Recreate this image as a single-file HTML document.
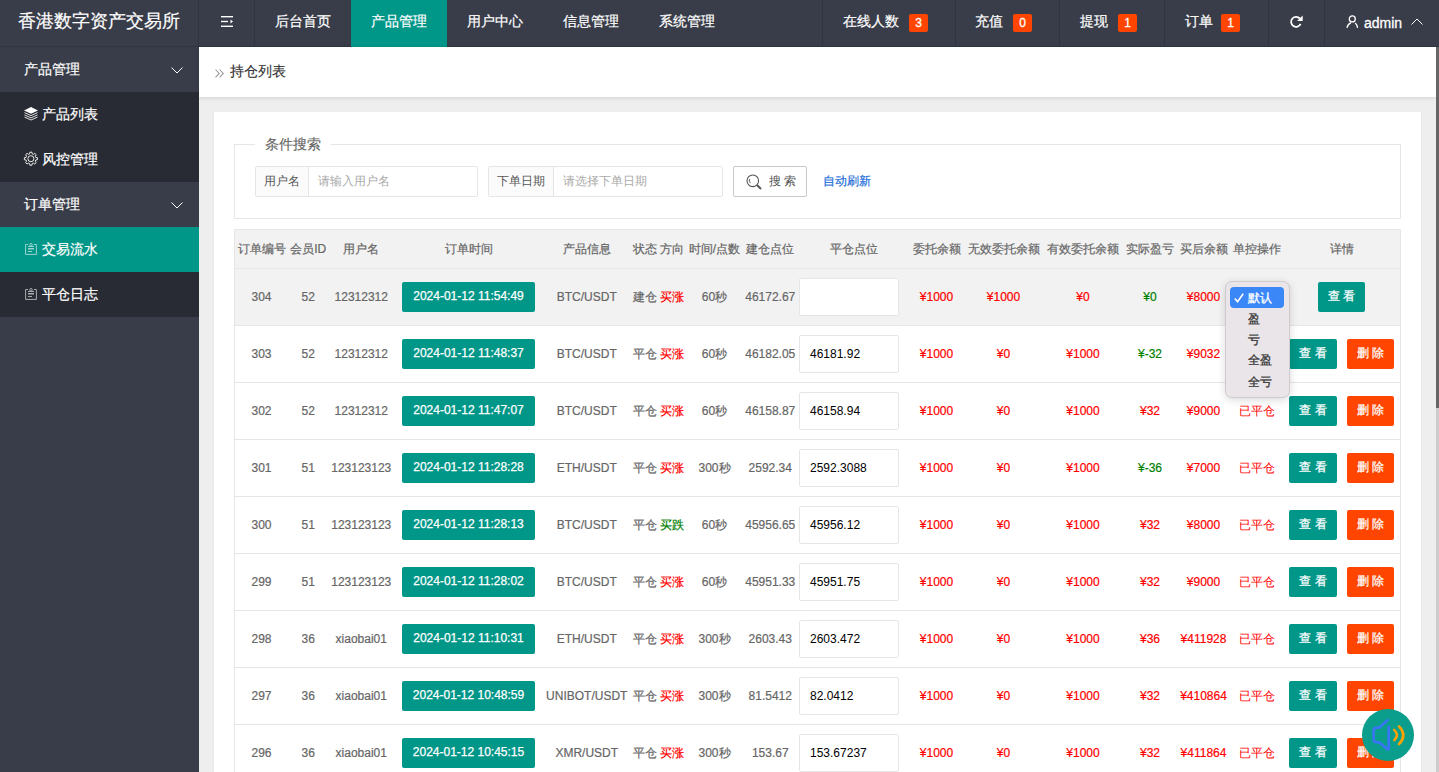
<!DOCTYPE html>
<html><head><meta charset="utf-8">
<style>
*{box-sizing:border-box;margin:0;padding:0}
html,body{width:1439px;height:772px;overflow:hidden}
body{font-family:"Liberation Sans",sans-serif;font-size:14px;color:#666;background:#eee;position:relative}
.abs{position:absolute}
svg{position:absolute;overflow:visible}
#hdr{position:absolute;left:0;top:0;width:1439px;height:47px;background:#393D49}
#hdr .t{position:absolute;top:0;height:47px;line-height:43px;-webkit-text-stroke:0.2px #fff;color:#fff;font-size:14px;white-space:nowrap}
.vd{position:absolute;top:0;width:1px;height:47px;background:#30343e}
.badge{position:absolute;top:14px;width:19px;height:18px;background:#FF4500;color:#fff;border-radius:2px;font-size:12px;line-height:18px;text-align:center;-webkit-text-stroke:0.3px #fff}
#side{position:absolute;left:0;top:47px;width:199px;height:725px;background:#393D49}
.si{position:absolute;left:0;width:199px;height:45px;line-height:44px;color:#fff;font-size:14px;-webkit-text-stroke:0.2px #fff}
.si.child{background:#282B33}
.si.act{background:#009688}
#crumb{position:absolute;left:199px;top:47px;width:1237px;height:50px;background:#fff;box-shadow:0 1px 4px rgba(0,0,0,.12)}
#panel{position:absolute;left:214px;top:112px;width:1207px;height:700px;background:#fff;box-shadow:0 1px 2px rgba(0,0,0,.06)}
#fs{position:absolute;left:234px;top:144px;width:1167px;height:75px;border:1px solid #e6e6e6}
#legend{position:absolute;left:255px;top:133px;width:76px;height:22px;background:#fff;text-align:center;line-height:22px;font-size:14px;color:#666;-webkit-text-stroke:0.15px #666}
.ig{position:absolute;top:166px;height:31px;border:1px solid #e6e6e6;border-radius:2px;background:#fff;font-size:12px;line-height:29px}
.ig .lb{position:absolute;left:0;top:0;height:29px;background:#FBFBFB;border-right:1px solid #e6e6e6;color:#555;text-align:center}
.ig .ph{position:absolute;top:0;color:#aaa}
#srch{position:absolute;left:733px;top:166px;width:74px;height:31px;border:1px solid #C9C9C9;border-radius:2px;background:#fff;color:#555;font-size:12px;line-height:29px}
#tbl{position:absolute;left:234px;top:229px;width:1167px;height:560px;border:1px solid #e6e6e6;border-bottom:0;background:#fff}
.tr{position:absolute;left:0;width:1165px;height:57px;border-top:1px solid #e6e6e6;font-size:12px;color:#666;-webkit-text-stroke:0.2px currentColor}
.tr.th{border-top:0;background:#F2F2F2;line-height:38px}
.tr.hov{background:#F2F2F2}
.c{position:absolute;top:0;height:56px;line-height:56px;text-align:center;white-space:nowrap}
.th .c{height:38px;line-height:38px}
.btn{display:inline-block;height:30px;line-height:28px;-webkit-text-stroke:0.25px #fff;padding:0 10px;border-radius:2px;color:#fff;font-size:12px;vertical-align:middle;white-space:nowrap}
.tb{position:absolute;top:13px;width:133px;padding:0;text-align:center;background:#009688}
.vb{position:absolute;top:13px;background:#009688}
.db{position:absolute;top:13px;background:#FF4500}
.inp{position:absolute;top:9px;width:100px;height:38px;border:1px solid #e6e6e6;border-radius:2px;background:#fff;color:#000;font-size:12px;line-height:36px;padding-left:10px;-webkit-text-stroke:0}
#pop{position:absolute;left:1224.5px;top:281px;width:65.5px;height:117px;background:#EAE5E8;border:1px solid #cfcacd;border-radius:7px;box-shadow:0 2px 9px rgba(0,0,0,.15)}
#pop .it{position:absolute;left:22px;font-size:12px;color:#333;line-height:14px;-webkit-text-stroke:0.3px currentColor}
#hl{position:absolute;left:4px;top:5px;width:54px;height:21px;background:#3B87F8;border-radius:4px}
#fab{position:absolute;left:1362px;top:709px;width:52px;height:52px;border-radius:50%;background:#0B9E8C}
#sb{position:absolute;left:1436px;top:47px;width:3px;height:725px;background:#ccc}
#sbt{position:absolute;left:0;top:0;width:3px;height:361px;background:#666}
</style></head><body>
<div id="hdr">
  <div class="t" style="left:18px;font-size:18px">香港数字资产交易所</div>
  <div class="abs" style="left:0;top:46px;width:1439px;height:1px;background:#30343e"></div>
  <div class="vd" style="left:198px"></div>
  <div class="vd" style="left:254px"></div>
  <svg style="left:221px;top:16px" width="12" height="11" viewBox="0 0 12 11"><rect x="0" y="0" width="12" height="1.4" fill="#fff"/><rect x="0" y="4.8" width="7" height="1.4" fill="#fff"/><path d="M9.5 3.6 L12 5.5 L9.5 7.4Z" fill="#fff"/><rect x="0" y="9.6" width="12" height="1.4" fill="#fff"/></svg>
  <div class="abs" style="left:351px;top:0;width:96px;height:47px;background:#009688"></div>
  <div class="t" style="left:275px">后台首页</div>
  <div class="t" style="left:371px">产品管理</div>
  <div class="t" style="left:467px">用户中心</div>
  <div class="t" style="left:563px">信息管理</div>
  <div class="t" style="left:659px">系统管理</div>
  <div class="vd" style="left:822px"></div>
  <div class="t" style="left:843px">在线人数</div><div class="badge" style="left:909px">3</div>
  <div class="vd" style="left:955px"></div>
  <div class="t" style="left:975px">充值</div><div class="badge" style="left:1013px">0</div>
  <div class="vd" style="left:1059px"></div>
  <div class="t" style="left:1080px">提现</div><div class="badge" style="left:1118px">1</div>
  <div class="vd" style="left:1164px"></div>
  <div class="t" style="left:1185px">订单</div><div class="badge" style="left:1221px">1</div>
  <div class="vd" style="left:1268px"></div>
  <svg style="left:1289px;top:15px" width="15" height="14" viewBox="0 0 15 14"><path d="M10.93 3.59 A5 5 0 1 0 11.63 8.91" fill="none" stroke="#fff" stroke-width="1.8"/><path d="M13.7 0.6 L13.7 5.9 L8.1 5.9 Z" fill="#fff"/></svg>
  <div class="vd" style="left:1324px"></div>
  <svg style="left:1346px;top:14px" width="13" height="15" viewBox="0 0 13 15"><circle cx="6.3" cy="4.9" r="3.0" fill="none" stroke="#fff" stroke-width="1.3"/><path d="M1.0 13.8 Q1.6 10.2 5 8.6" fill="none" stroke="#fff" stroke-width="1.3"/><path d="M9.2 9.0 Q11 10.6 11.6 13.8" fill="none" stroke="#fff" stroke-width="1.3"/></svg>
  <div class="t" style="left:1364px;top:1.5px;font-size:14px;-webkit-text-stroke:0.3px #fff">admin</div>
  <svg style="left:1411px;top:18px" width="12" height="7" viewBox="0 0 12 7"><path d="M0.5 6.5 L6 1 L11.5 6.5" fill="none" stroke="#fff" stroke-width="1"/></svg>
</div>
<div id="side">
  <div class="si" style="top:0"><span class="abs" style="left:24px">产品管理</span>
    <svg style="left:171px;top:20px" width="12" height="7" viewBox="0 0 12 7"><path d="M0.5 0.5 L6 6 L11.5 0.5" fill="none" stroke="#fff" stroke-width="1"/></svg></div>
  <div class="si child" style="top:45px">
    <svg style="left:24px;top:15px" width="14" height="13" viewBox="0 0 14 13"><path d="M7 0 L14 3.4 L7 6.8 L0 3.4Z" fill="#fff"/><path d="M0.5 5.6 L7 8.6 L13.5 5.6 M0.5 7.9 L7 10.9 L13.5 7.9 M0.5 10.1 L7 13 L13.5 10.1" fill="none" stroke="#fff" stroke-width="1" opacity=".85"/></svg>
    <span class="abs" style="left:42px">产品列表</span></div>
  <div class="si child" style="top:90px">
    <svg style="left:23px;top:14px" width="16" height="16" viewBox="0 0 16 16"><path d="M6.87 1.18 L8.93 1.18 L9.19 2.87 L10.40 3.37 L11.78 2.36 L13.24 3.82 L12.23 5.20 L12.73 6.41 L14.42 6.67 L14.42 8.73 L12.73 8.99 L12.23 10.20 L13.24 11.58 L11.78 13.04 L10.40 12.03 L9.19 12.53 L8.93 14.22 L6.87 14.22 L6.61 12.53 L5.40 12.03 L4.02 13.04 L2.56 11.58 L3.57 10.20 L3.07 8.99 L1.38 8.73 L1.38 6.67 L3.07 6.41 L3.57 5.20 L2.56 3.82 L4.02 2.36 L5.40 3.37 L6.61 2.87Z" fill="none" stroke="#fff" stroke-width="1" stroke-linejoin="round" opacity=".9"/><circle cx="7.9" cy="7.7" r="3" fill="none" stroke="#fff" stroke-width="1" opacity=".9"/></svg>
    <span class="abs" style="left:42px">风控管理</span></div>
  <div class="si" style="top:135px"><span class="abs" style="left:24px">订单管理</span>
    <svg style="left:171px;top:20px" width="12" height="7" viewBox="0 0 12 7"><path d="M0.5 0.5 L6 6 L11.5 0.5" fill="none" stroke="#fff" stroke-width="1"/></svg></div>
  <div class="si act" style="top:180px">
    <svg style="left:25px;top:16px" width="12" height="12" viewBox="0 0 12 12" opacity=".6"><path d="M3 1.5 L0.6 1.5 L0.6 11.4 L11.4 11.4 L11.4 1.5 L9 1.5" fill="none" stroke="#fff" stroke-width="1"/><circle cx="6" cy="1.8" r="1.3" fill="none" stroke="#fff" stroke-width="1"/><rect x="3" y="3" width="6" height="1" fill="#fff"/><rect x="3" y="5" width="6" height="1.5" fill="#fff"/><rect x="3" y="8" width="4" height="1" fill="#fff"/></svg>
    <span class="abs" style="left:42px">交易流水</span></div>
  <div class="si child" style="top:225px">
    <svg style="left:25px;top:16px" width="12" height="12" viewBox="0 0 12 12" opacity=".6"><path d="M3 1.5 L0.6 1.5 L0.6 11.4 L11.4 11.4 L11.4 1.5 L9 1.5" fill="none" stroke="#fff" stroke-width="1"/><circle cx="6" cy="1.8" r="1.3" fill="none" stroke="#fff" stroke-width="1"/><rect x="3" y="3" width="6" height="1" fill="#fff"/><rect x="3" y="5" width="6" height="1.5" fill="#fff"/><rect x="3" y="8" width="4" height="1" fill="#fff"/></svg>
    <span class="abs" style="left:42px">平仓日志</span></div>
</div>
<div id="crumb">
  <svg style="left:15.5px;top:21.7px" width="9" height="9" viewBox="0 0 9 9"><path d="M0.5 0.5 L4.2 4.4 L0.5 8.3 M4.6 0.5 L8.3 4.4 L4.6 8.3" fill="none" stroke="#999" stroke-width="1.05"/></svg>
  <span class="abs" style="left:31px;top:14px;color:#333;font-size:14px;line-height:20px;-webkit-text-stroke:0.15px #333">持仓列表</span></div>
<div id="panel"></div>
<div id="fs"></div>
<div id="legend">条件搜索</div>
<div class="ig" style="left:255px;width:223px"><div class="lb" style="width:53px">用户名</div><div class="ph" style="left:62px">请输入用户名</div></div>
<div class="ig" style="left:488px;width:235px"><div class="lb" style="width:65px">下单日期</div><div class="ph" style="left:74px">请选择下单日期</div></div>
<div id="srch">
  <svg style="left:12px;top:7px" width="16" height="16" viewBox="0 0 16 16"><circle cx="6.8" cy="6.8" r="5.8" fill="none" stroke="#555" stroke-width="1.1"/><path d="M11 11 L15 15" stroke="#555" stroke-width="2"/><path d="M3.6 5 A3.8 3.8 0 0 0 4.4 9.2" fill="none" stroke="#555" stroke-width="0.9"/></svg>
  <span class="abs" style="left:35px;top:0;letter-spacing:3px">搜索</span></div>
<div class="abs" style="left:823px;top:171px;font-size:12px;line-height:20px;color:#1E6FD9;-webkit-text-stroke:0.2px #1E6FD9">自动刷新</div>
<div id="tbl">
<div class="tr th" style="top:0px;height:38px"><div class="c" style="left:0px;width:53px">订单编号</div><div class="c" style="left:53px;width:40.5px">会员ID</div><div class="c" style="left:93.5px;width:65.5px">用户名</div><div class="c" style="left:159px;width:149px">订单时间</div><div class="c" style="left:308px;width:87.5px">产品信息</div><div class="c" style="left:395.5px;width:55.5px">状态 方向</div><div class="c" style="left:451px;width:57px">时间/点数</div><div class="c" style="left:508px;width:54.5px">建仓点位</div><div class="c" style="left:562.5px;width:113.5px">平仓点位</div><div class="c" style="left:676px;width:51px">委托余额</div><div class="c" style="left:727px;width:83px">无效委托余额</div><div class="c" style="left:810px;width:76px">有效委托余额</div><div class="c" style="left:886px;width:58px">实际盈亏</div><div class="c" style="left:944px;width:49px">买后余额</div><div class="c" style="left:993px;width:58px">单控操作</div><div class="c" style="left:1051px;width:111.5px">详情</div></div>
<div class="tr hov" style="top:38px"><div class="c" style="left:0px;width:53px">304</div><div class="c" style="left:53px;width:40.5px">52</div><div class="c" style="left:93.5px;width:65.5px">12312312</div><span class="btn tb" style="left:167px">2024-01-12 11:54:49</span><div class="c" style="left:308px;width:87.5px">BTC/USDT</div><div class="c" style="left:395.5px;width:55.5px">建仓 <span style="color:#f00">买涨</span></div><div class="c" style="left:451px;width:57px">60秒</div><div class="c" style="left:508px;width:54.5px">46172.67</div><div class="inp" style="left:564px"></div><div class="c" style="left:676px;width:51px"><span style="color:#f00">¥1000</span></div><div class="c" style="left:727px;width:83px"><span style="color:#f00">¥1000</span></div><div class="c" style="left:810px;width:76px"><span style="color:#f00">¥0</span></div><div class="c" style="left:886px;width:58px"><span style="color:#008000">¥0</span></div><div class="c" style="left:944px;width:49px"><span style="color:#f00">¥8000</span></div><div class="c" style="left:993px;width:58px"><span style="color:#f00;-webkit-text-stroke:0"></span></div><span class="btn vb" style="left:1083.1px">查 看</span></div>
<div class="tr" style="top:95px"><div class="c" style="left:0px;width:53px">303</div><div class="c" style="left:53px;width:40.5px">52</div><div class="c" style="left:93.5px;width:65.5px">12312312</div><span class="btn tb" style="left:167px">2024-01-12 11:48:37</span><div class="c" style="left:308px;width:87.5px">BTC/USDT</div><div class="c" style="left:395.5px;width:55.5px">平仓 <span style="color:#f00">买涨</span></div><div class="c" style="left:451px;width:57px">60秒</div><div class="c" style="left:508px;width:54.5px">46182.05</div><div class="inp" style="left:564px">46181.92</div><div class="c" style="left:676px;width:51px"><span style="color:#f00">¥1000</span></div><div class="c" style="left:727px;width:83px"><span style="color:#f00">¥0</span></div><div class="c" style="left:810px;width:76px"><span style="color:#f00">¥1000</span></div><div class="c" style="left:886px;width:58px"><span style="color:#008000">¥-32</span></div><div class="c" style="left:944px;width:49px"><span style="color:#f00">¥9032</span></div><div class="c" style="left:993px;width:58px"><span style="color:#f00;-webkit-text-stroke:0">已平仓</span></div><span class="btn vb" style="left:1054.2px">查 看</span><span class="btn db" style="left:1112px">删 除</span></div>
<div class="tr" style="top:152px"><div class="c" style="left:0px;width:53px">302</div><div class="c" style="left:53px;width:40.5px">52</div><div class="c" style="left:93.5px;width:65.5px">12312312</div><span class="btn tb" style="left:167px">2024-01-12 11:47:07</span><div class="c" style="left:308px;width:87.5px">BTC/USDT</div><div class="c" style="left:395.5px;width:55.5px">平仓 <span style="color:#f00">买涨</span></div><div class="c" style="left:451px;width:57px">60秒</div><div class="c" style="left:508px;width:54.5px">46158.87</div><div class="inp" style="left:564px">46158.94</div><div class="c" style="left:676px;width:51px"><span style="color:#f00">¥1000</span></div><div class="c" style="left:727px;width:83px"><span style="color:#f00">¥0</span></div><div class="c" style="left:810px;width:76px"><span style="color:#f00">¥1000</span></div><div class="c" style="left:886px;width:58px"><span style="color:#f00">¥32</span></div><div class="c" style="left:944px;width:49px"><span style="color:#f00">¥9000</span></div><div class="c" style="left:993px;width:58px"><span style="color:#f00;-webkit-text-stroke:0">已平仓</span></div><span class="btn vb" style="left:1054.2px">查 看</span><span class="btn db" style="left:1112px">删 除</span></div>
<div class="tr" style="top:209px"><div class="c" style="left:0px;width:53px">301</div><div class="c" style="left:53px;width:40.5px">51</div><div class="c" style="left:93.5px;width:65.5px">123123123</div><span class="btn tb" style="left:167px">2024-01-12 11:28:28</span><div class="c" style="left:308px;width:87.5px">ETH/USDT</div><div class="c" style="left:395.5px;width:55.5px">平仓 <span style="color:#f00">买涨</span></div><div class="c" style="left:451px;width:57px">300秒</div><div class="c" style="left:508px;width:54.5px">2592.34</div><div class="inp" style="left:564px">2592.3088</div><div class="c" style="left:676px;width:51px"><span style="color:#f00">¥1000</span></div><div class="c" style="left:727px;width:83px"><span style="color:#f00">¥0</span></div><div class="c" style="left:810px;width:76px"><span style="color:#f00">¥1000</span></div><div class="c" style="left:886px;width:58px"><span style="color:#008000">¥-36</span></div><div class="c" style="left:944px;width:49px"><span style="color:#f00">¥7000</span></div><div class="c" style="left:993px;width:58px"><span style="color:#f00;-webkit-text-stroke:0">已平仓</span></div><span class="btn vb" style="left:1054.2px">查 看</span><span class="btn db" style="left:1112px">删 除</span></div>
<div class="tr" style="top:266px"><div class="c" style="left:0px;width:53px">300</div><div class="c" style="left:53px;width:40.5px">51</div><div class="c" style="left:93.5px;width:65.5px">123123123</div><span class="btn tb" style="left:167px">2024-01-12 11:28:13</span><div class="c" style="left:308px;width:87.5px">BTC/USDT</div><div class="c" style="left:395.5px;width:55.5px">平仓 <span style="color:#008000">买跌</span></div><div class="c" style="left:451px;width:57px">60秒</div><div class="c" style="left:508px;width:54.5px">45956.65</div><div class="inp" style="left:564px">45956.12</div><div class="c" style="left:676px;width:51px"><span style="color:#f00">¥1000</span></div><div class="c" style="left:727px;width:83px"><span style="color:#f00">¥0</span></div><div class="c" style="left:810px;width:76px"><span style="color:#f00">¥1000</span></div><div class="c" style="left:886px;width:58px"><span style="color:#f00">¥32</span></div><div class="c" style="left:944px;width:49px"><span style="color:#f00">¥8000</span></div><div class="c" style="left:993px;width:58px"><span style="color:#f00;-webkit-text-stroke:0">已平仓</span></div><span class="btn vb" style="left:1054.2px">查 看</span><span class="btn db" style="left:1112px">删 除</span></div>
<div class="tr" style="top:323px"><div class="c" style="left:0px;width:53px">299</div><div class="c" style="left:53px;width:40.5px">51</div><div class="c" style="left:93.5px;width:65.5px">123123123</div><span class="btn tb" style="left:167px">2024-01-12 11:28:02</span><div class="c" style="left:308px;width:87.5px">BTC/USDT</div><div class="c" style="left:395.5px;width:55.5px">平仓 <span style="color:#f00">买涨</span></div><div class="c" style="left:451px;width:57px">60秒</div><div class="c" style="left:508px;width:54.5px">45951.33</div><div class="inp" style="left:564px">45951.75</div><div class="c" style="left:676px;width:51px"><span style="color:#f00">¥1000</span></div><div class="c" style="left:727px;width:83px"><span style="color:#f00">¥0</span></div><div class="c" style="left:810px;width:76px"><span style="color:#f00">¥1000</span></div><div class="c" style="left:886px;width:58px"><span style="color:#f00">¥32</span></div><div class="c" style="left:944px;width:49px"><span style="color:#f00">¥9000</span></div><div class="c" style="left:993px;width:58px"><span style="color:#f00;-webkit-text-stroke:0">已平仓</span></div><span class="btn vb" style="left:1054.2px">查 看</span><span class="btn db" style="left:1112px">删 除</span></div>
<div class="tr" style="top:380px"><div class="c" style="left:0px;width:53px">298</div><div class="c" style="left:53px;width:40.5px">36</div><div class="c" style="left:93.5px;width:65.5px">xiaobai01</div><span class="btn tb" style="left:167px">2024-01-12 11:10:31</span><div class="c" style="left:308px;width:87.5px">ETH/USDT</div><div class="c" style="left:395.5px;width:55.5px">平仓 <span style="color:#f00">买涨</span></div><div class="c" style="left:451px;width:57px">300秒</div><div class="c" style="left:508px;width:54.5px">2603.43</div><div class="inp" style="left:564px">2603.472</div><div class="c" style="left:676px;width:51px"><span style="color:#f00">¥1000</span></div><div class="c" style="left:727px;width:83px"><span style="color:#f00">¥0</span></div><div class="c" style="left:810px;width:76px"><span style="color:#f00">¥1000</span></div><div class="c" style="left:886px;width:58px"><span style="color:#f00">¥36</span></div><div class="c" style="left:944px;width:49px"><span style="color:#f00">¥411928</span></div><div class="c" style="left:993px;width:58px"><span style="color:#f00;-webkit-text-stroke:0">已平仓</span></div><span class="btn vb" style="left:1054.2px">查 看</span><span class="btn db" style="left:1112px">删 除</span></div>
<div class="tr" style="top:437px"><div class="c" style="left:0px;width:53px">297</div><div class="c" style="left:53px;width:40.5px">36</div><div class="c" style="left:93.5px;width:65.5px">xiaobai01</div><span class="btn tb" style="left:167px">2024-01-12 10:48:59</span><div class="c" style="left:308px;width:87.5px">UNIBOT/USDT</div><div class="c" style="left:395.5px;width:55.5px">平仓 <span style="color:#f00">买涨</span></div><div class="c" style="left:451px;width:57px">300秒</div><div class="c" style="left:508px;width:54.5px">81.5412</div><div class="inp" style="left:564px">82.0412</div><div class="c" style="left:676px;width:51px"><span style="color:#f00">¥1000</span></div><div class="c" style="left:727px;width:83px"><span style="color:#f00">¥0</span></div><div class="c" style="left:810px;width:76px"><span style="color:#f00">¥1000</span></div><div class="c" style="left:886px;width:58px"><span style="color:#f00">¥32</span></div><div class="c" style="left:944px;width:49px"><span style="color:#f00">¥410864</span></div><div class="c" style="left:993px;width:58px"><span style="color:#f00;-webkit-text-stroke:0">已平仓</span></div><span class="btn vb" style="left:1054.2px">查 看</span><span class="btn db" style="left:1112px">删 除</span></div>
<div class="tr" style="top:494px"><div class="c" style="left:0px;width:53px">296</div><div class="c" style="left:53px;width:40.5px">36</div><div class="c" style="left:93.5px;width:65.5px">xiaobai01</div><span class="btn tb" style="left:167px">2024-01-12 10:45:15</span><div class="c" style="left:308px;width:87.5px">XMR/USDT</div><div class="c" style="left:395.5px;width:55.5px">平仓 <span style="color:#f00">买涨</span></div><div class="c" style="left:451px;width:57px">300秒</div><div class="c" style="left:508px;width:54.5px">153.67</div><div class="inp" style="left:564px">153.67237</div><div class="c" style="left:676px;width:51px"><span style="color:#f00">¥1000</span></div><div class="c" style="left:727px;width:83px"><span style="color:#f00">¥0</span></div><div class="c" style="left:810px;width:76px"><span style="color:#f00">¥1000</span></div><div class="c" style="left:886px;width:58px"><span style="color:#f00">¥32</span></div><div class="c" style="left:944px;width:49px"><span style="color:#f00">¥411864</span></div><div class="c" style="left:993px;width:58px"><span style="color:#f00;-webkit-text-stroke:0">已平仓</span></div><span class="btn vb" style="left:1054.2px">查 看</span><span class="btn db" style="left:1112px">删 除</span></div>
</div>
<div id="pop">
  <div id="hl"></div>
  <svg style="left:8px;top:11px" width="10" height="10" viewBox="0 0 10 10"><path d="M0.8 5.5 L3.6 8.8 L9.2 0.8" fill="none" stroke="#fff" stroke-width="1.6"/></svg>
  <div class="it" style="top:9px;color:#fff">默认</div>
  <div class="it" style="top:29.5px">盈</div>
  <div class="it" style="top:50.5px">亏</div>
  <div class="it" style="top:71px">全盈</div>
  <div class="it" style="top:93px">全亏</div>
</div>
<div id="fab">
  <svg style="left:-7px;top:-9px" width="70" height="70" viewBox="0 0 70 70"><path d="M32.6 20.1 L24 27.7 L21.2 27.7 Q18.6 27.7 18.6 30.3 L18.6 39.6 Q18.6 42.2 21.2 42.2 L24 42.2 L32.4 49.2 Q33.7 50 33.7 48.4 L33.7 26.7" fill="none" stroke="#3B74FA" stroke-width="2.5" stroke-linecap="round" stroke-linejoin="round"/><path d="M39.2 29.9 Q44.6 35 39.4 40" fill="none" stroke="#FFA200" stroke-width="2.6" stroke-linecap="round"/><path d="M44 26.3 Q52.6 35 44 44.2" fill="none" stroke="#FFA200" stroke-width="2.6" stroke-linecap="round"/></svg>
</div>
<div id="sb"><div id="sbt"></div></div>
</body></html>
